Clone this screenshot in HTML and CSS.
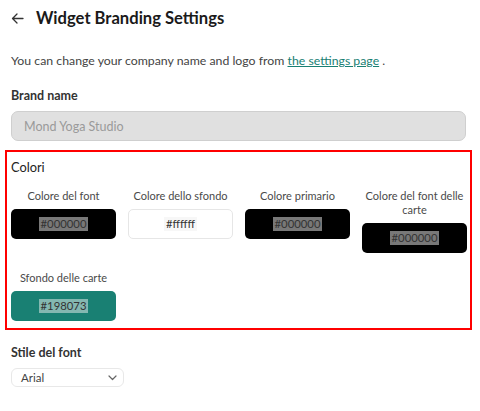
FILE: index.html
```html
<!DOCTYPE html>
<html>
<head>
<meta charset="utf-8">
<link rel="stylesheet" href="styles.css">
</head>
<body>
<div class="page">
  <div class="header">
    <svg class="back" width="13" height="11" viewBox="0 0 13 11"><path d="M12 5.5H1.5M6 1L1.5 5.5 6 10" fill="none" stroke="#333" stroke-width="1.3" stroke-linecap="round" stroke-linejoin="round"/></svg>
    <h1 class="title">Widget Branding Settings</h1>
  </div>
  <p class="desc">You can change your company name and logo from <a class="link" href="#">the settings page</a> .</p>
  <div class="field">
    <div class="label">Brand name</div>
    <div class="input">Mond Yoga Studio</div>
  </div>
  <div class="colors">
    <div class="label section">Colori</div>
    <div class="grid">
      <div class="item">
        <div class="item-label">Colore del font</div>
        <div class="swatch dark"><span class="hex">#000000</span></div>
      </div>
      <div class="item">
        <div class="item-label">Colore dello sfondo</div>
        <div class="swatch light"><span class="hex">#ffffff</span></div>
      </div>
      <div class="item">
        <div class="item-label">Colore primario</div>
        <div class="swatch dark"><span class="hex">#000000</span></div>
      </div>
      <div class="item">
        <div class="item-label narrow">Colore del font delle carte</div>
        <div class="swatch dark"><span class="hex">#000000</span></div>
      </div>
      <div class="item">
        <div class="item-label">Sfondo delle carte</div>
        <div class="swatch teal"><span class="hex">#198073</span></div>
      </div>
    </div>
  </div>
  <div class="field font-field">
    <div class="label">Stile del font</div>
    <div class="select">
      <span>Arial</span>
      <svg width="9" height="6" viewBox="0 0 9 6"><path d="M1 1l3.5 3.5L8 1" fill="none" stroke="#666" stroke-width="1.2" stroke-linecap="round" stroke-linejoin="round"/></svg>
    </div>
  </div>
</div>
</body>
</html>
```
FILE: styles.css
```css
* { box-sizing: border-box; }
html, body { margin: 0; padding: 0; background: #fff; }
body { font-family: Lato, "Noto Sans", sans-serif; color: #222; }
.page { padding: 6px 14px 0 11px; }
.header { display: flex; align-items: center; gap: 12px; height: 24px; }
.title { margin: 0; font-size: 16.6px; font-weight: 700; color: #1a1a1a; }
.desc { margin: 23px 0 0; font-size: 12.3px; color: #444; line-height: 16px; }
.link { color: #198073; text-decoration: underline; }
.field { margin-top: 19px; }
.label { font-size: 12.5px; font-weight: 700; color: #333; line-height: 16px; }
.label.section { font-weight: 400; color: #222; font-size: 12.8px; }
.input { margin-top: 7px; height: 30px; background: #e0e0e0; border: 1px solid #cfcfcf; border-radius: 7px; padding: 0 12px; display: flex; align-items: center; font-size: 12.5px; color: #9a9a9a; }
.colors { margin: 9px -6px 0 -6px; border: 2px solid #f00; padding: 7px 4px 7px 4px; }
.grid { display: grid; grid-template-columns: repeat(4, 105px); column-gap: 12px; row-gap: 18px; margin-top: 14px; }
.item { display: flex; flex-direction: column; align-items: stretch; }
.item-label { font-size: 11px; color: #4a4a4a; text-align: center; line-height: 14px; margin-bottom: 6px; }
.item-label.narrow { padding: 0 2px; }
.swatch { height: 30px; border-radius: 5px; display: flex; align-items: center; justify-content: center; }
.dark { background: #000; }
.light { background: #fff; border: 1px solid #e6e6e6; }
.teal { background: #198073; }
.hex { font-size: 11.3px; color: #333; background: rgba(240,240,240,0.5); padding: 0 2px; line-height: 14px; }
.font-field { margin-top: 15px; }
.select { margin-top: 7px; width: 113px; height: 19px; border: 1px solid #e8e8e8; border-radius: 6px; display: flex; align-items: center; justify-content: space-between; padding: 0 6px 0 9px; font-size: 11.5px; color: #444; }
```
